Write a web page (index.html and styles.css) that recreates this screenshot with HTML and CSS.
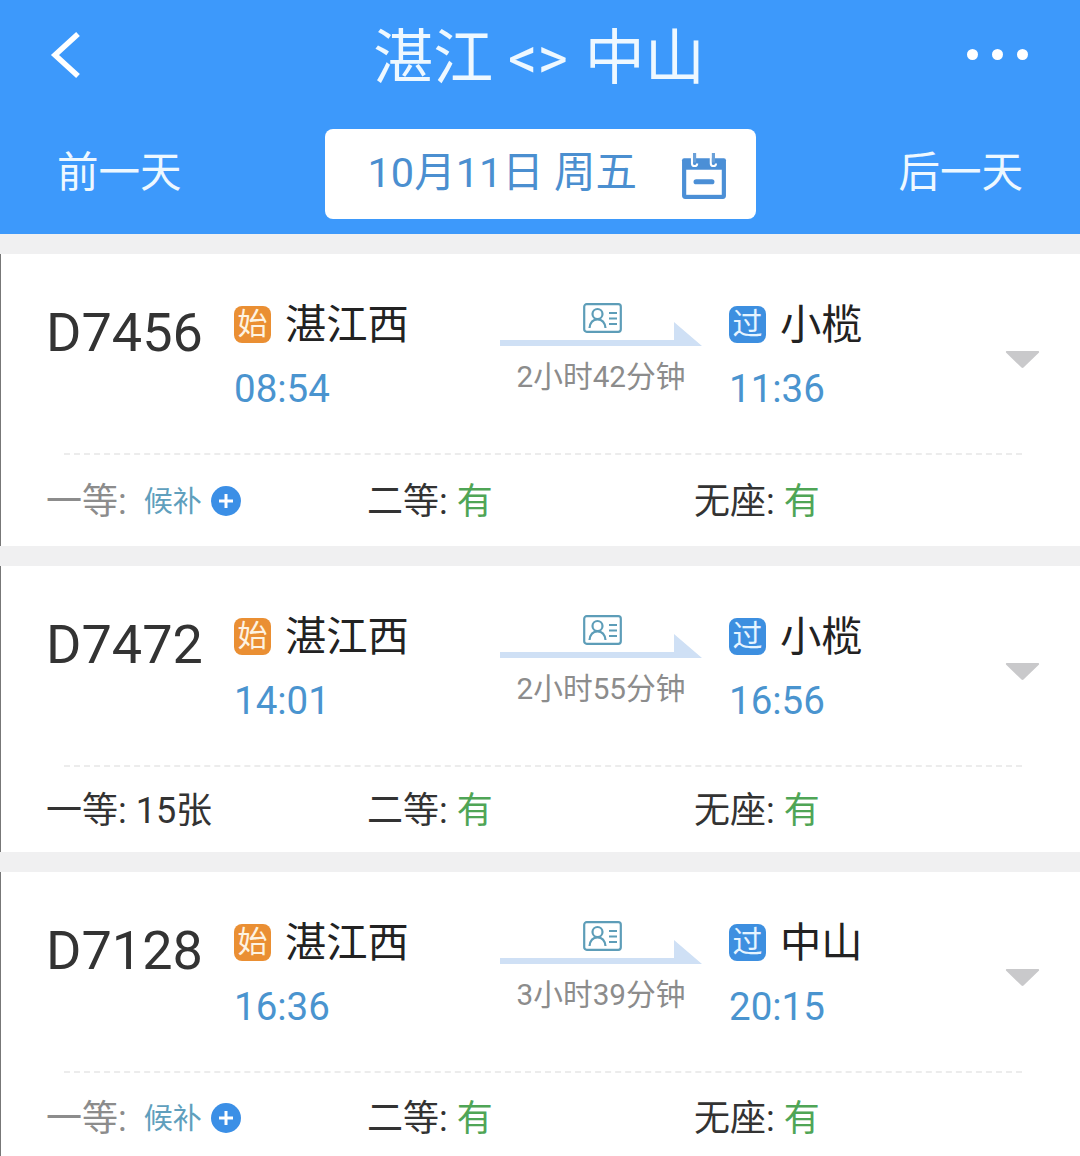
FILE: index.html
```html
<!DOCTYPE html>
<html lang="zh">
<head>
<meta charset="utf-8">
<title>湛江 &lt;&gt; 中山</title>
<link rel="stylesheet" href="styles.css">
</head>
<body>
<svg class="defs" width="0" height="0" aria-hidden="true">
  <defs>
    <symbol id="id-card" viewBox="0 0 39 30">
      <rect x="1.2" y="1.2" width="36.6" height="27.6" rx="2.5" fill="none" stroke="#5d9db8" stroke-width="2.2"/>
      <circle cx="14.5" cy="11" r="5" fill="none" stroke="#5d9db8" stroke-width="2.2"/>
      <path d="M6.500 25c.6-5.500 3.500-8.500 8-8.500s7.400 3 8 8.500" fill="none" stroke="#5d9db8" stroke-width="2.2"/>
      <path d="M26 10h8M26 15.500h8M26 21h8" fill="none" stroke="#5d9db8" stroke-width="2"/>
    </symbol>
    <symbol id="arrow" viewBox="0 0 202 26">
      <path d="M0 19h174V1l28 24H0z" fill="#cfe0f5"/>
    </symbol>
    <symbol id="caret" viewBox="0 0 35 19">
      <path d="M2 1h31c1 0 1.500 1 .8 1.800L18.500 17.500c-.6.600-1.400.600-2 0L1.200 2.800C.5 2 1 1 2 1z" fill="#c9c9cb"/>
    </symbol>
    <symbol id="plus" viewBox="0 0 30 30">
      <circle cx="15" cy="15" r="15" fill="#3b8fe6"/>
      <path d="M15 8v14M8 15h14" stroke="#fff" stroke-width="3"/>
    </symbol>
  </defs>
</svg>

<header class="top">
  <div class="title-row">
    <svg class="back" viewBox="0 0 32 48" aria-hidden="true"><path d="M28 3 5 24l23 21" fill="none" stroke="#fff" stroke-width="5.500"/></svg>
    <h1 class="title">湛江 <span class="swap">&lt;&gt;</span> 中山</h1>
    <div class="dots"><i></i><i></i><i></i></div>
  </div>
  <div class="date-row">
    <span class="day-link">前一天</span>
    <div class="date-pill">
      <span class="date-text">10月11日 周五</span>
      <svg class="cal" viewBox="2 1 42 44" aria-hidden="true">
        <path d="M4 6h38a2 2 0 0 1 2 2v34a3 3 0 0 1-3 3H5a3 3 0 0 1-3-3V8a2 2 0 0 1 2-2z" fill="#4b8fd6"/>
        <rect x="6" y="17" width="34" height="24" fill="#fff"/>
        <rect x="13" y="26" width="20" height="5" rx="2.500" fill="#4b8fd6"/>
        <path d="M11.500 2v9a2.500 2.500 0 0 0 5 0M29.500 2v9a2.500 2.500 0 0 0 5 0" fill="none" stroke="#fff" stroke-width="2"/>
        <path d="M14 1v9M32 1v9" stroke="#6aa0d8" stroke-width="3"/>
      </svg>
    </div>
    <span class="day-link">后一天</span>
  </div>
</header>

<main>
  <article class="card card-a">
    <div class="trip">
      <div class="train">D7456</div>
      <div class="stop">
        <div class="station"><span class="badge badge-start">始</span>湛江西</div>
        <div class="time">08:54</div>
      </div>
      <div class="mid">
        <svg class="id"><use href="#id-card"/></svg>
        <svg class="arrow"><use href="#arrow"/></svg>
        <div class="duration">2小时42分钟</div>
      </div>
      <div class="stop">
        <div class="station"><span class="badge badge-pass">过</span>小榄</div>
        <div class="time">11:36</div>
      </div>
      <svg class="caret"><use href="#caret"/></svg>
    </div>
    <div class="seats">
      <div class="seat muted">一等: <span class="wait">候补</span><svg class="plus"><use href="#plus"/></svg></div>
      <div class="seat">二等: <span class="yes">有</span></div>
      <div class="seat">无座: <span class="yes">有</span></div>
    </div>
  </article>

  <article class="card card-b">
    <div class="trip">
      <div class="train">D7472</div>
      <div class="stop">
        <div class="station"><span class="badge badge-start">始</span>湛江西</div>
        <div class="time">14:01</div>
      </div>
      <div class="mid">
        <svg class="id"><use href="#id-card"/></svg>
        <svg class="arrow"><use href="#arrow"/></svg>
        <div class="duration">2小时55分钟</div>
      </div>
      <div class="stop">
        <div class="station"><span class="badge badge-pass">过</span>小榄</div>
        <div class="time">16:56</div>
      </div>
      <svg class="caret"><use href="#caret"/></svg>
    </div>
    <div class="seats">
      <div class="seat">一等: 15张</div>
      <div class="seat">二等: <span class="yes">有</span></div>
      <div class="seat">无座: <span class="yes">有</span></div>
    </div>
  </article>

  <article class="card card-c">
    <div class="trip">
      <div class="train">D7128</div>
      <div class="stop">
        <div class="station"><span class="badge badge-start">始</span>湛江西</div>
        <div class="time">16:36</div>
      </div>
      <div class="mid">
        <svg class="id"><use href="#id-card"/></svg>
        <svg class="arrow"><use href="#arrow"/></svg>
        <div class="duration">3小时39分钟</div>
      </div>
      <div class="stop">
        <div class="station"><span class="badge badge-pass">过</span>中山</div>
        <div class="time">20:15</div>
      </div>
      <svg class="caret"><use href="#caret"/></svg>
    </div>
    <div class="seats">
      <div class="seat muted">一等: <span class="wait">候补</span><svg class="plus"><use href="#plus"/></svg></div>
      <div class="seat">二等: <span class="yes">有</span></div>
      <div class="seat">无座: <span class="yes">有</span></div>
    </div>
  </article>
</main>
</body>
</html>
```

FILE: styles.css
```css
* { box-sizing: border-box; }

html, body {
  margin: 0;
  height: 1156px;
  overflow: hidden;
}

body {
  background: #f0f0f1;
  font-family: Roboto, "Noto Sans CJK SC", sans-serif;
  color: #333;
}

.defs { display: block; height: 0; }

/* Header */
.top {
  height: 234px;
  background: #3d99fb;
  color: #eef8ff;
  display: flex;
  flex-direction: column;
}

.title-row {
  height: 129px;
  padding: 0 52px 20px 50px;
  display: grid;
  grid-template-columns: 1fr auto 1fr;
  align-items: center;
}

.back { width: 32px; height: 48px; }

.title {
  margin: 0;
  padding-top: 9px;
  font-size: 60px;
  font-weight: 400;
  line-height: 70px;
  white-space: nowrap;
}

.swap { font-size: 58px; line-height: 1; vertical-align: 1px; margin-right: 2px; }

.dots {
  justify-self: end;
  display: flex;
  gap: 14px;
}

.dots i {
  width: 11px;
  height: 11px;
  border-radius: 50%;
  background: #fff;
}

.date-row {
  padding: 0 57px 0 57px;
  display: flex;
  justify-content: space-between;
  align-items: center;
}

.day-link { font-size: 41.500px; line-height: 88px; height: 90px; }

.date-pill {
  width: 431px;
  height: 90px;
  background: #fff;
  border-radius: 8px;
  padding: 0 29px 0 43px;
  display: flex;
  justify-content: space-between;
  align-items: center;
  color: #4b8fd0;
}

.date-text { font-size: 41.500px; line-height: 1; white-space: nowrap; margin-bottom: 3px; }

.cal { width: 46px; height: 46px; margin-top: 3px; }

/* Cards */
main { padding-top: 20px; display: flex; flex-direction: column; gap: 20px; }

.card {
  background: #fff;
  border-left: 1px solid #777;
  display: flex;
  flex-direction: column;
}

.card-a { height: 292px; }
.card-b { height: 286px; }
.card-c { height: 284px; }

.trip {
  height: 201px;
  margin: 0 40px 0 0;
  padding-left: 45px;
  display: grid;
  grid-template-columns: 188px 266px 202px 303px 35px;
  align-items: start;
  position: relative;
}

.trip::after {
  content: "";
  position: absolute;
  left: 63px;
  right: 18px;
  bottom: 0;
  border-bottom: 2px dashed #ececec;
}

.train {
  margin-top: 48px;
  font-size: 54px;
  line-height: 62px;
  white-space: nowrap;
}

.stop { padding-top: 46px; }

.mid + .stop { margin-left: 27px; }

.station {
  display: flex;
  align-items: center;
  gap: 14px;
  font-size: 41.300px;
  line-height: 50px;
  color: #222;
}

.badge {
  width: 37px;
  height: 37px;
  margin-top: -2px;
  border-radius: 8px;
  color: #fdf3e2;
  font-size: 30px;
  line-height: 36px;
  text-align: center;
}

.badge-start { background: #ea8f33; }
.badge-pass { background: #3d8fe0; color: #e6f4ff; }

.time {
  margin-top: 16px;
  font-size: 38.500px;
  line-height: 46px;
  color: #4a94cf;
}

.mid {
  padding-top: 49px;
  display: flex;
  flex-direction: column;
  align-items: center;
}

.id { width: 39px; height: 30px; display: block; margin-left: 2px; }

.arrow { width: 202px; height: 26px; margin-top: -12px; display: block; }

.duration {
  margin-top: 10px;
  font-size: 29.700px;
  line-height: 40px;
  color: #8c8c8c;
  white-space: nowrap;
}

.caret { width: 35px; height: 19px; margin-top: 96px; }

.seats {
  padding: 24px 0 0 45px;
  display: grid;
  grid-template-columns: 321px 327px 1fr;
}

.card-b .seats { padding-top: 21px; }
.card-c .seats { padding-top: 23px; }

.seat {
  display: flex;
  align-items: center;
  font-size: 36px;
  line-height: 46px;
  white-space: pre;
}

.muted { color: #8c8c8c; }

.wait { font-size: 29px; color: #5f9fbd; margin-left: 8px; }

.plus { width: 30px; height: 30px; margin: -2px 0 0 9px; }

.yes { color: #4fa556; }
```
